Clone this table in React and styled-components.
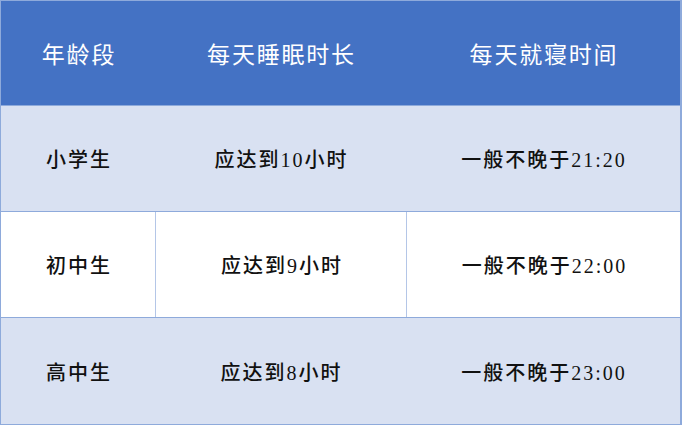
import React from "react";
import styled, { createGlobalStyle } from "styled-components";

const GlobalStyle = createGlobalStyle`
  html, body {
    margin: 0;
    padding: 0;
    background: #ffffff;
  }
  body {
    font-family: "Liberation Serif", "Noto Sans CJK SC", serif;
  }
`;

const rows = [
  { age: "小学生", sleep: "应达到10小时", bed: "一般不晚于21:20" },
  { age: "初中生", sleep: "应达到9小时", bed: "一般不晚于22:00" },
  { age: "高中生", sleep: "应达到8小时", bed: "一般不晚于23:00" },
];

const App = () => {
  return (
    <>
      <GlobalStyle />
      <Table>
        <HeaderRow>
          <HeadCell>年龄段</HeadCell>
          <HeadCell>每天睡眠时长</HeadCell>
          <HeadCell>每天就寝时间</HeadCell>
        </HeaderRow>
        {rows.map((r, i) => (
          <Row key={r.age} $striped={i % 2 === 0} $last={i === rows.length - 1}>
            <Cell>{r.age}</Cell>
            <Cell $divider={i % 2 !== 0}>{r.sleep}</Cell>
            <Cell $divider={i % 2 !== 0}>{r.bed}</Cell>
          </Row>
        ))}
      </Table>
    </>
  );
};

const Table = styled.div`
  width: 682px;
  height: 425px;
  box-sizing: border-box;
  border: 1px solid #8eaadb;
  border-right-width: 2px;
  display: grid;
  grid-template-rows: 105px 106px 106px 106px;
`;

const HeaderRow = styled.div`
  display: grid;
  grid-template-columns: 154px 251px 1fr;
  background: #4472c4;
  border-bottom: 1px solid #8eaadb;
`;

const HeadCell = styled.div`
  display: flex;
  align-items: center;
  justify-content: center;
  color: #ffffff;
  font-size: 23px;
  letter-spacing: 1.8px;
  padding-left: 2px;
`;

const Row = styled.div`
  display: grid;
  grid-template-columns: 154px 251px 1fr;
  background: ${(p) => (p.$striped ? "#d9e1f2" : "#ffffff")};
  border-bottom: ${(p) => (p.$last ? "none" : "1px solid #8eaadb")};
`;

const Cell = styled.div`
  display: flex;
  align-items: center;
  justify-content: center;
  color: #111111;
  font-size: 20px;
  font-weight: 500;
  letter-spacing: 2px;
  padding-left: 2px;
  border-left: ${(p) => (p.$divider ? "1px solid #b4c6e7" : "none")};
`;

export default App;
